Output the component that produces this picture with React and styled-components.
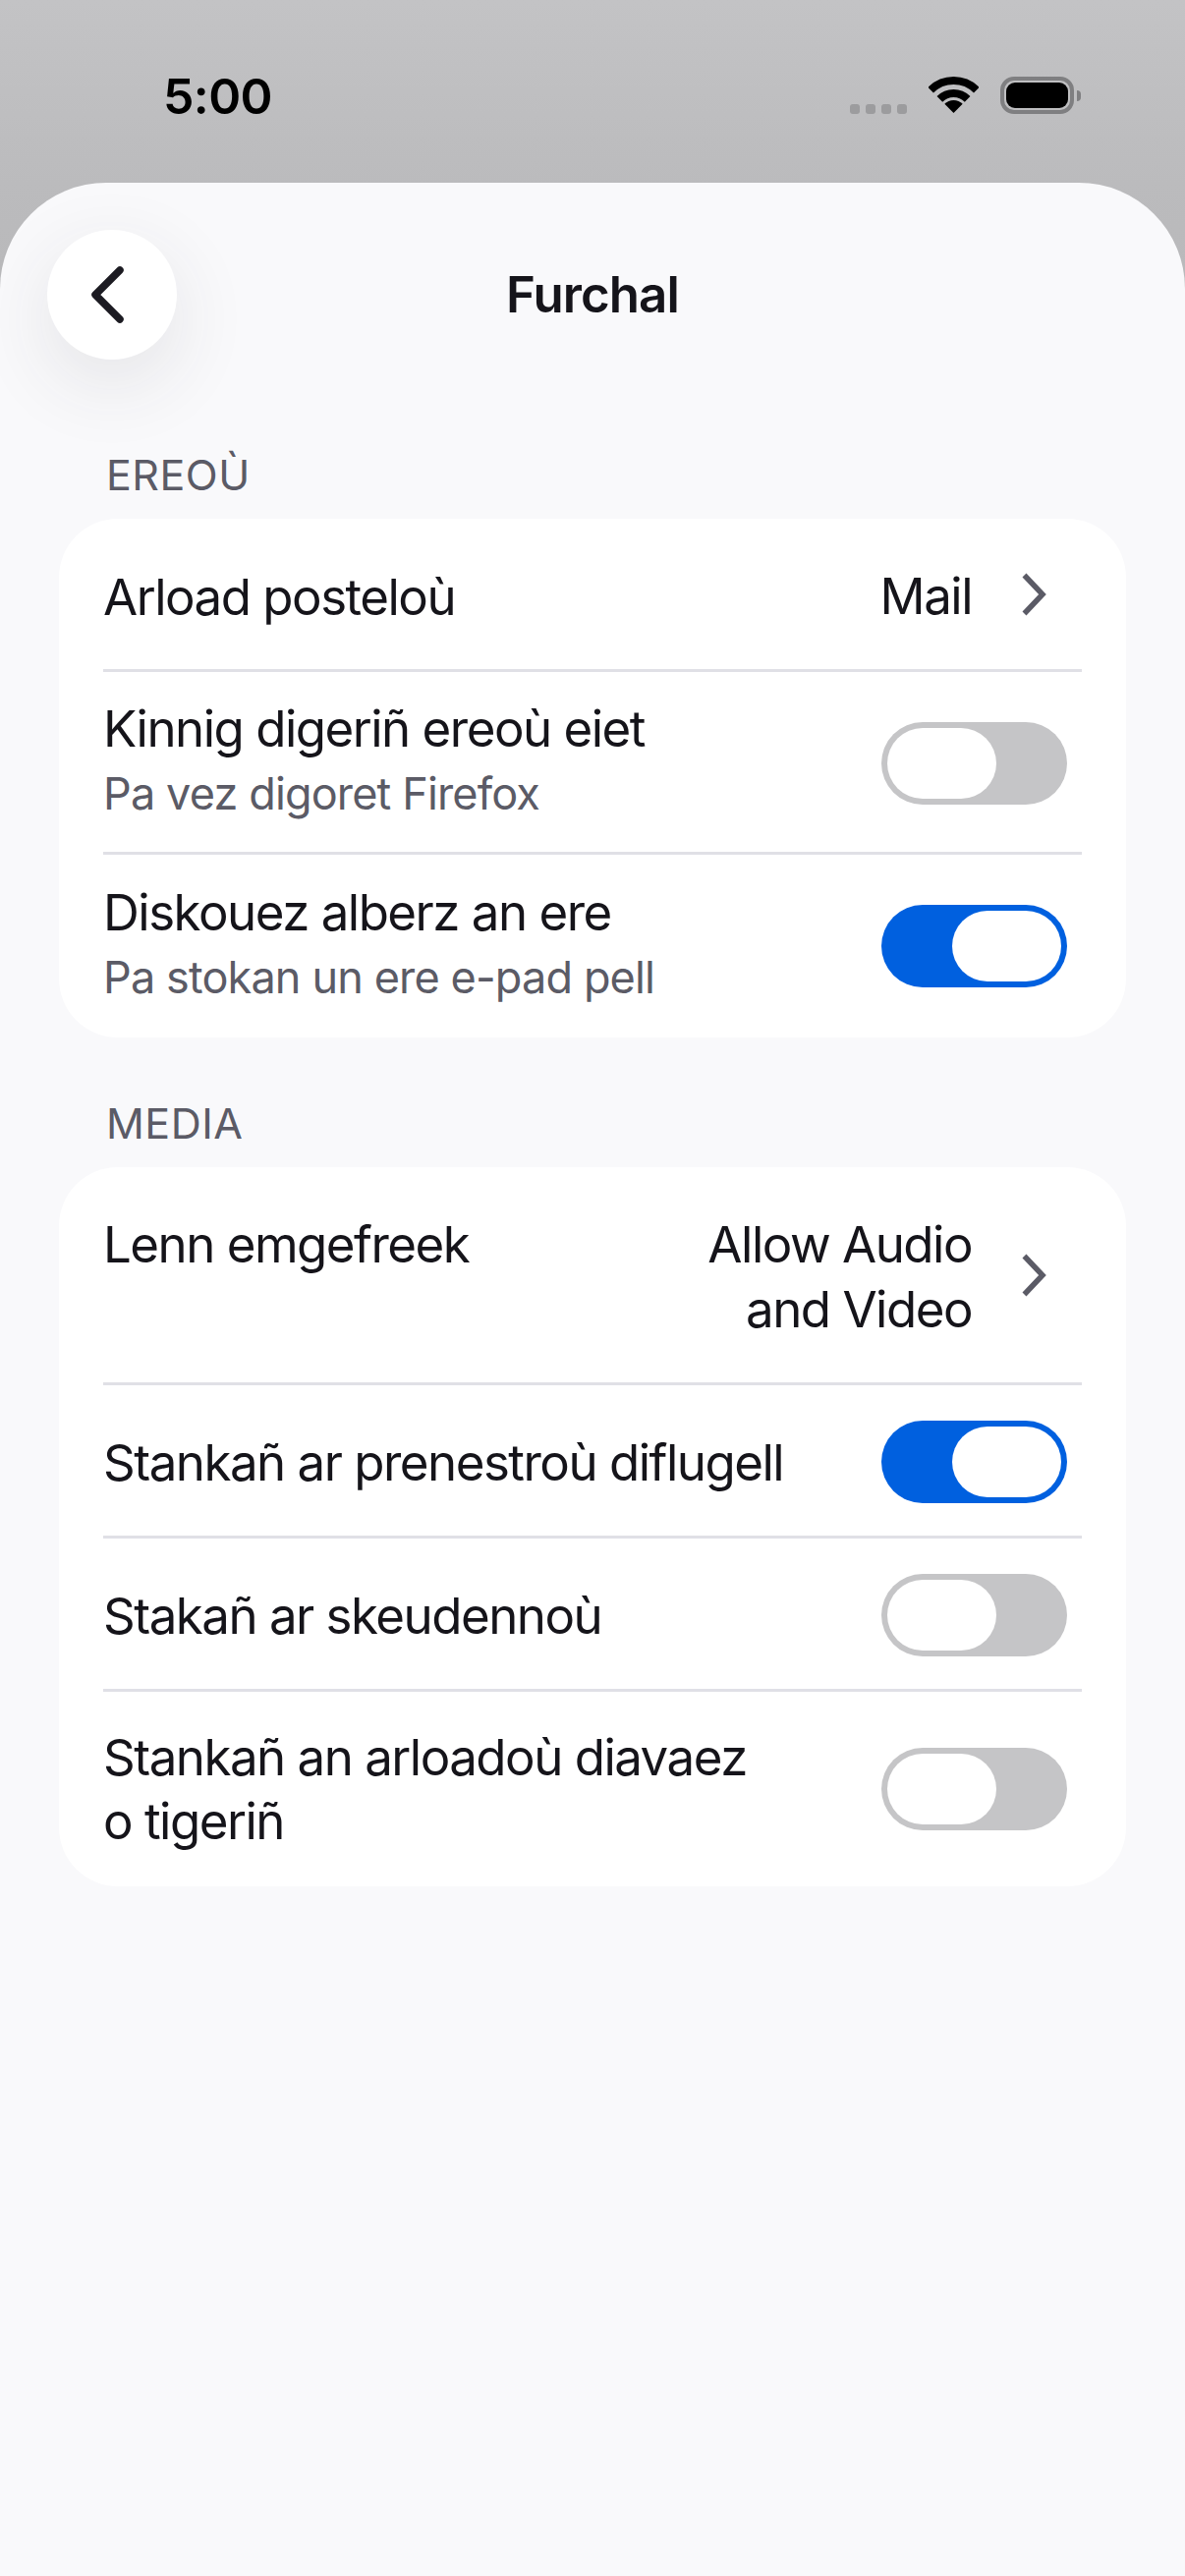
import React from "react";
import styled, { createGlobalStyle } from "styled-components";

const Global = createGlobalStyle`
  html, body { margin: 0; padding: 0; }
  body { font-family: Inter, "Noto Sans", "Liberation Sans", sans-serif; }
`;

const Screen = styled.div`
  width: 1206px;
  height: 2622px;
  display: flex;
  flex-direction: column;
  overflow: hidden;
  background: linear-gradient(#c3c3c5, #bbbbbd 186px, #b8b8ba 320px);
`;

const StatusBar = styled.div`
  height: 186px;
  flex: none;
  box-sizing: border-box;
  display: flex;
  align-items: flex-start;
  justify-content: space-between;
  padding: 70px 113px 0 166px;
`;

const Time = styled.div`
  font-size: 50px;
  line-height: 56px;
  font-weight: 600;
  letter-spacing: -0.6px;
  color: #000;
`;

const StatusIcons = styled.div`
  display: flex;
  align-items: flex-start;
  margin-top: 8px;
`;

const Dots = styled.div`
  display: flex;
  gap: 6px;
  margin: 28px 22px 0 0;
`;

const Dot = styled.span`
  width: 10px;
  height: 10px;
  border-radius: 3px;
  background: #9c9c9e;
`;

const Battery = styled.div`
  position: relative;
  width: 75px;
  height: 38px;
  margin-left: 22px;
  box-sizing: border-box;
  border: 4px solid #7f7f81;
  border-radius: 14px;
  padding: 2px;
  &::after {
    content: "";
    position: absolute;
    right: -11px;
    top: 10px;
    width: 4px;
    height: 11px;
    border-radius: 0 6px 6px 0;
    background: #7f7f81;
  }
`;

const BatteryFill = styled.div`
  height: 100%;
  border-radius: 9px;
  background: #000;
`;

const Sheet = styled.div`
  flex: 1;
  background: #f9f9fb;
  border-radius: 108px 108px 0 0;
  padding-top: 48px;
`;

const NavBar = styled.div`
  display: grid;
  grid-template-columns: 132px 1fr 132px;
  align-items: center;
  padding: 0 48px;
`;

const BackButton = styled.div`
  width: 132px;
  height: 132px;
  border-radius: 50%;
  background: #fff;
  display: flex;
  align-items: center;
  justify-content: center;
  box-shadow: 0 24px 80px rgba(58, 57, 68, 0.11);
  svg { margin-right: 9px; }
`;

const Title = styled.div`
  text-align: center;
  font-size: 51px;
  line-height: 60px;
  font-weight: 600;
  letter-spacing: -0.9px;
  color: #15141a;
`;

const Section = styled.section`
  margin: 0 60px;
`;

const SectionLabel = styled.div`
  font-size: 43px;
  line-height: 50px;
  font-weight: 400;
  letter-spacing: 0.5px;
  color: #5b5b66;
  padding-left: 48px;
  margin-bottom: 20px;
  margin-top: ${(p) => p.$top}px;
`;

const Card = styled.div`
  background: #fff;
  border-radius: 60px;
  padding: 0 45px;
`;

const Row = styled.div`
  display: flex;
  align-items: ${(p) => (p.$top ? "flex-start" : "center")};
  justify-content: space-between;
  padding: ${(p) => p.$pad};
  border-bottom: ${(p) => (p.$last ? "none" : "3px solid #e0e0e6")};
`;

const TextBlock = styled.div`
  max-width: 690px;
`;

const Label = styled.div`
  font-size: 51px;
  line-height: 65px;
  letter-spacing: -1.5px;
  color: #15141a;
`;

const Sub = styled.div`
  font-size: 45px;
  line-height: 67px;
  letter-spacing: -0.85px;
  color: #5b5b66;
`;

const Trailing = styled.div`
  display: flex;
  align-items: center;
  align-self: center;
  gap: 51px;
  margin-right: 36px;
`;

const Value = styled.div`
  font-size: 51px;
  line-height: 66px;
  letter-spacing: -1.5px;
  color: #15141a;
  text-align: right;
`;

const ChevronIcon = styled.svg`
  display: block;
  margin-top: -4px;
`;

const ToggleTrack = styled.div`
  width: 189px;
  height: 84px;
  box-sizing: border-box;
  flex: none;
  margin: ${(p) => p.$nudge || 0}px 15px 0 0;
  padding: 6px;
  border-radius: 42px;
  display: flex;
  justify-content: ${(p) => (p.$on ? "flex-end" : "flex-start")};
  background: ${(p) => (p.$on ? "#0060df" : "#c5c5c7")};
`;

const ToggleKnob = styled.div`
  width: 111px;
  height: 72px;
  border-radius: 36px;
  background: #fff;
`;

const Toggle = ({ on, nudge }) => (
  <ToggleTrack $on={on} $nudge={nudge}>
    <ToggleKnob />
  </ToggleTrack>
);

const Chevron = () => (
  <ChevronIcon width="25" height="46" viewBox="0 0 25 46" fill="none">
    <path d="M2.5 3.5 L21 23 L2.5 42.5" stroke="#5b5b66" strokeWidth="5.5" strokeLinejoin="miter" />
  </ChevronIcon>
);

const Wifi = () => (
  <svg width="51" height="37" viewBox="0 0 51 37" fill="none">
    <path d="M2.17 13.67 A33 33 0 0 1 48.83 13.67" stroke="#000" strokeWidth="8" />
    <path d="M11.36 22.86 A20 20 0 0 1 39.64 22.86" stroke="#000" strokeWidth="8" />
    <path d="M25.5 37 L16.31 27.81 A13 13 0 0 1 34.69 27.81 Z" fill="#000" />
  </svg>
);

const BackIcon = () => (
  <svg width="34" height="60" viewBox="0 0 34 60" fill="none">
    <path d="M29 5 L4 30 L29 55" stroke="#1c1b22" strokeWidth="7.5" strokeLinecap="round" strokeLinejoin="round" />
  </svg>
);

export default function App() {
  return (
    <>
      <Global />
      <Screen>
        <StatusBar>
          <Time>5:00</Time>
          <StatusIcons>
            <Dots>
              <Dot />
              <Dot />
              <Dot />
              <Dot />
            </Dots>
            <Wifi />
            <Battery>
              <BatteryFill />
            </Battery>
          </StatusIcons>
        </StatusBar>
        <Sheet>
          <NavBar>
            <BackButton>
              <BackIcon />
            </BackButton>
            <Title>Furchal</Title>
            <span />
          </NavBar>
          <Section>
            <SectionLabel $top={92}>EREOÙ</SectionLabel>
            <Card>
              <Row $pad="46px 0 41px">
                <Label>Arload posteloù</Label>
                <Trailing>
                  <Value>Mail</Value>
                  <Chevron />
                </Trailing>
              </Row>
              <Row $pad="25px 0 26px">
                <TextBlock>
                  <Label>Kinnig digeriñ ereoù eiet</Label>
                  <Sub>Pa vez digoret Firefox</Sub>
                </TextBlock>
                <Toggle nudge={3} />
              </Row>
              <Row $pad="26px 0 28px" $last>
                <TextBlock>
                  <Label>Diskouez alberz an ere</Label>
                  <Sub>Pa stokan un ere e-pad pell</Sub>
                </TextBlock>
                <Toggle on nudge={2} />
              </Row>
            </Card>
          </Section>
          <Section>
            <SectionLabel $top={62}>MEDIA</SectionLabel>
            <Card>
              <Row $pad="46px 0 41px" $top>
                <Label>Lenn emgefreek</Label>
                <Trailing>
                  <Value>
                    Allow Audio
                    <br />
                    and Video
                  </Value>
                  <Chevron />
                </Trailing>
              </Row>
              <Row $pad="36px 0 33px">
                <Label>Stankañ ar prenestroù diflugell</Label>
                <Toggle on />
              </Row>
              <Row $pad="36px 0 33px">
                <Label>Stakañ ar skeudennoù</Label>
                <Toggle />
              </Row>
              <Row $pad="34px 0" $last>
                <TextBlock>
                  <Label>Stankañ an arloadoù diavaez o tigeriñ</Label>
                </TextBlock>
                <Toggle />
              </Row>
            </Card>
          </Section>
        </Sheet>
      </Screen>
    </>
  );
}
